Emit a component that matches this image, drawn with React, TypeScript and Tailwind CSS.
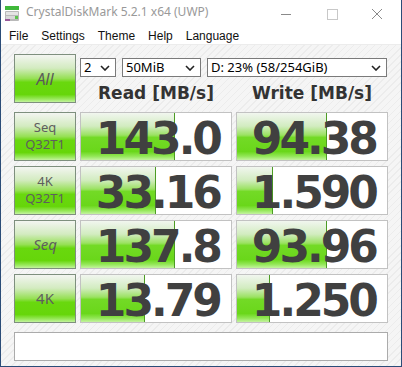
import React from 'react'

const ROWS = [
  { label: ['Seq', 'Q32T1'], italic: false, read: '143.0', rw: 94, write: '94.38', ww: 90 },
  { label: ['4K', 'Q32T1'], italic: false, read: '33.16', rw: 75, write: '1.590', ww: 36 },
  { label: ['Seq'], italic: true, read: '137.8', rw: 94, write: '93.96', ww: 90 },
  { label: ['4K'], italic: false, read: '13.79', rw: 64, write: '1.250', ww: 33 },
]

const MENU = ['File', 'Settings', 'Theme', 'Help', 'Language']

const greenBtn =
  'border border-[#7e8f7e] bg-[linear-gradient(to_bottom,#f3f5f1_0%,#d3ebc0_28%,#96e055_50%,#69d80e_58%,#66d60a_84%,#9ae95e_94%,#c4f3a0_100%)]'

function Chevron() {
  return (
    <svg width="10" height="6" viewBox="0 0 10 6" className="shrink-0">
      <polyline points="1,1 5,5 9,1" fill="none" stroke="#222" strokeWidth="1.6" />
    </svg>
  )
}

function Select({ text, className }: { text: string; className: string }) {
  return (
    <div className={`h-[19px] bg-white border border-[#7a7a7a] flex items-center justify-between pl-[3px] pr-[5px] text-[13px] text-black ${className}`}>
      <span className="leading-none">{text}</span>
      <Chevron />
    </div>
  )
}

function Value({ value, width }: { value: string; width: number }) {
  return (
    <div className="relative h-[49px] bg-white border border-[#c2c2c2] flex items-center justify-end pr-[11px] pt-[5px]">
      <div
        className="absolute left-0 top-0 bottom-0 border-r border-[#4c9c24] bg-[linear-gradient(to_bottom,#f1f6ef_0%,#d2ecc0_28%,#9be262_47%,#73da26_52%,#6ad71a_82%,#93e757_92%,#c4f3a0_100%)]"
        style={{ width }}
      />
      <span
        className="relative text-[44px] leading-none font-bold text-[#404040] tracking-[-3px]"
        style={{ fontFamily: '"DejaVu Sans", Verdana, sans-serif' }}
      >
        {value}
      </span>
    </div>
  )
}

export default function App() {
  return (
    <div
      className="w-[402px] h-[367px] bg-white border-x border-b border-[#2b4c78] flex flex-col overflow-hidden"
      style={{ fontFamily: '"Noto Sans", "Open Sans", sans-serif' }}
    >
      {/* title bar */}
      <div className="h-[24px] flex items-center shrink-0">
        <svg width="16" height="17" viewBox="0 0 16 17" className="ml-[3px] mt-[2px]">
          <rect x="1" y="1" width="14" height="4" fill="#3fb83a" />
          <rect x="1" y="6" width="14" height="10" rx="1" fill="#b9b9b9" />
          <rect x="2" y="7" width="12" height="3" fill="#e4e4e4" />
          <rect x="2" y="11" width="9" height="3" fill="#d8d8d8" />
          <rect x="11" y="11" width="3" height="3" fill="#5cc34f" />
          <rect x="1" y="14" width="5" height="2" fill="#9a5a9a" />
        </svg>
        <span className="ml-[6px] text-[12px] text-[#999999] leading-none">CrystalDiskMark 5.2.1 x64 (UWP)</span>
        <div className="ml-auto flex items-center">
          <svg width="46" height="22" viewBox="0 0 46 22">
            <line x1="18" y1="13.5" x2="28" y2="13.5" stroke="#8a8a8a" strokeWidth="1" />
          </svg>
          <svg width="46" height="22" viewBox="0 0 46 22">
            <rect x="18.5" y="8.5" width="10" height="10" fill="none" stroke="#c8c8c8" strokeWidth="1" />
          </svg>
          <svg width="46" height="22" viewBox="0 0 46 22">
            <line x1="17" y1="8" x2="27" y2="18" stroke="#8a8a8a" strokeWidth="1" />
            <line x1="27" y1="8" x2="17" y2="18" stroke="#8a8a8a" strokeWidth="1" />
          </svg>
        </div>
      </div>

      {/* menu bar */}
      <div
        className="h-[20px] flex items-center gap-[13px] pl-[8px] pt-[4px] text-[12px] text-[#111] shrink-0"
        style={{ fontFamily: '"Liberation Sans", Arial, sans-serif' }}
      >
        {MENU.map(m => (
          <span key={m} className="leading-none">{m}</span>
        ))}
      </div>

      {/* main panel */}
      <div className="flex-1 border-t border-[#ececec] bg-[repeating-linear-gradient(135deg,#f5f5f5_0px,#f5f5f5_4px,#ececec_4px,#ececec_5px)] pl-[13px] pt-[9px]">
        <div className="grid grid-cols-[62px_152px_152px] gap-x-[4px] gap-y-[5px]">
          <div className={`h-[49px] flex items-center justify-center ${greenBtn}`}>
            <span className="italic text-[16px] text-[#5a5a5a]">All</span>
          </div>
          <div className="col-span-2 flex flex-col">
            <div className="flex gap-[6px] mt-[4px]">
              <Select text="2" className="w-[36px]" />
              <Select text="50MiB" className="w-[79px]" />
              <Select text="D: 23% (58/254GiB)" className="w-[180px]" />
            </div>
            <div
              className="flex-1 grid grid-cols-2 gap-x-[4px] items-center text-[17px] font-bold text-[#333] pt-[4px]"
              style={{ fontFamily: '"DejaVu Sans", Verdana, sans-serif' }}
            >
              <div className="text-center">Read [MB/s]</div>
              <div className="text-center">Write [MB/s]</div>
            </div>
          </div>

          {ROWS.map((r, i) => (
            <React.Fragment key={i}>
              <div className={`h-[49px] flex flex-col items-center justify-center text-[#5e5e5e] ${greenBtn}`}>
                {r.label.length === 2 ? (
                  <>
                    <span className="text-[13px] leading-[17px]">{r.label[0]}</span>
                    <span className="text-[13px] leading-[17px]">{r.label[1]}</span>
                  </>
                ) : (
                  <span className={`text-[15px] leading-none ${r.italic ? 'italic' : ''}`}>{r.label[0]}</span>
                )}
              </div>
              <Value value={r.read} width={r.rw} />
              <Value value={r.write} width={r.ww} />
            </React.Fragment>
          ))}
        </div>
        <div className="mt-[9px] w-[374px] h-[29px] bg-white border border-[#ababab]" />
      </div>
    </div>
  )
}
